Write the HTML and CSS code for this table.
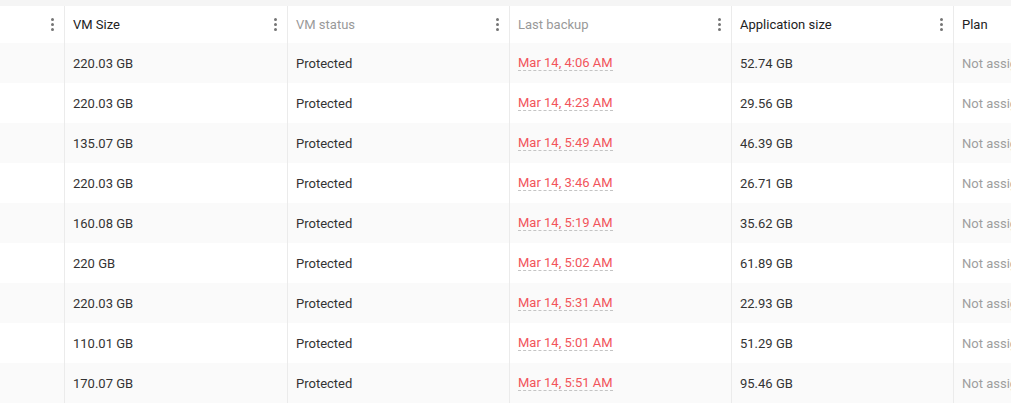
FILE: index.html
```html
<!DOCTYPE html>
<html>
<head>
<meta charset="utf-8">
<link rel="stylesheet" href="styles.css">
</head>
<body>
<div class="strip"></div>
<div class="table">
  <div class="row head">
    <div class="cell c0"><span class="kebab"><i></i><i></i><i></i></span></div>
    <div class="cell c1"><span class="htext">VM Size</span><span class="kebab"><i></i><i></i><i></i></span></div>
    <div class="cell c2"><span class="htext muted">VM status</span><span class="kebab"><i></i><i></i><i></i></span></div>
    <div class="cell c3"><span class="htext muted">Last backup</span><span class="kebab"><i></i><i></i><i></i></span></div>
    <div class="cell c4"><span class="htext">Application size</span><span class="kebab"><i></i><i></i><i></i></span></div>
    <div class="cell c5"><span class="htext">Plan</span></div>
  </div>
  <div class="row"><div class="cell c0"></div><div class="cell c1">220.03 GB</div><div class="cell c2">Protected</div><div class="cell c3"><span class="date">Mar 14, 4:06 AM</span></div><div class="cell c4">52.74 GB</div><div class="cell c5 na">Not assigned</div></div>
  <div class="row"><div class="cell c0"></div><div class="cell c1">220.03 GB</div><div class="cell c2">Protected</div><div class="cell c3"><span class="date">Mar 14, 4:23 AM</span></div><div class="cell c4">29.56 GB</div><div class="cell c5 na">Not assigned</div></div>
  <div class="row"><div class="cell c0"></div><div class="cell c1">135.07 GB</div><div class="cell c2">Protected</div><div class="cell c3"><span class="date">Mar 14, 5:49 AM</span></div><div class="cell c4">46.39 GB</div><div class="cell c5 na">Not assigned</div></div>
  <div class="row"><div class="cell c0"></div><div class="cell c1">220.03 GB</div><div class="cell c2">Protected</div><div class="cell c3"><span class="date">Mar 14, 3:46 AM</span></div><div class="cell c4">26.71 GB</div><div class="cell c5 na">Not assigned</div></div>
  <div class="row"><div class="cell c0"></div><div class="cell c1">160.08 GB</div><div class="cell c2">Protected</div><div class="cell c3"><span class="date">Mar 14, 5:19 AM</span></div><div class="cell c4">35.62 GB</div><div class="cell c5 na">Not assigned</div></div>
  <div class="row"><div class="cell c0"></div><div class="cell c1">220 GB</div><div class="cell c2">Protected</div><div class="cell c3"><span class="date">Mar 14, 5:02 AM</span></div><div class="cell c4">61.89 GB</div><div class="cell c5 na">Not assigned</div></div>
  <div class="row"><div class="cell c0"></div><div class="cell c1">220.03 GB</div><div class="cell c2">Protected</div><div class="cell c3"><span class="date">Mar 14, 5:31 AM</span></div><div class="cell c4">22.93 GB</div><div class="cell c5 na">Not assigned</div></div>
  <div class="row"><div class="cell c0"></div><div class="cell c1">110.01 GB</div><div class="cell c2">Protected</div><div class="cell c3"><span class="date">Mar 14, 5:01 AM</span></div><div class="cell c4">51.29 GB</div><div class="cell c5 na">Not assigned</div></div>
  <div class="row"><div class="cell c0"></div><div class="cell c1">170.07 GB</div><div class="cell c2">Protected</div><div class="cell c3"><span class="date">Mar 14, 5:51 AM</span></div><div class="cell c4">95.46 GB</div><div class="cell c5 na">Not assigned</div></div>
</div>
</body>
</html>
```
FILE: styles.css
```css
html, body {
  margin: 0;
  padding: 0;
  overflow: hidden;
  background: #fff;
  font-family: Roboto, "Liberation Sans", sans-serif;
  font-size: 13px;
  color: #333;
}
.strip {
  height: 6px;
  background: #f5f5f5;
}
.table {
  width: 1200px;
}
.row {
  display: grid;
  grid-template-columns: 64px 223px 222px 222px 222px 247px;
  height: 40px;
}
.row:nth-child(even) {
  background: #fafafa;
}
.row.head {
  height: 37px;
  background: #fff;
}
.cell {
  display: flex;
  align-items: center;
  padding-left: 8px;
  box-sizing: border-box;
  border-left: 1px solid #ebebeb;
  white-space: nowrap;
  overflow: hidden;
}
.cell.c0 {
  border-left: none;
}
.head .cell {
  justify-content: space-between;
  padding-right: 10px;
}
.head .c0 {
  justify-content: flex-end;
}
.htext {
  color: #222;
}
.htext.muted {
  color: #999;
}
.kebab {
  display: flex;
  flex-direction: column;
  gap: 2px;
  width: 3px;
}
.kebab i {
  display: block;
  width: 3px;
  height: 3px;
  border-radius: 50%;
  background: #757575;
}
.date {
  color: #f2545b;
  border-bottom: 1px dashed #c4c4c4;
  line-height: 15px;
}
.na {
  color: #9e9e9e;
}
```
